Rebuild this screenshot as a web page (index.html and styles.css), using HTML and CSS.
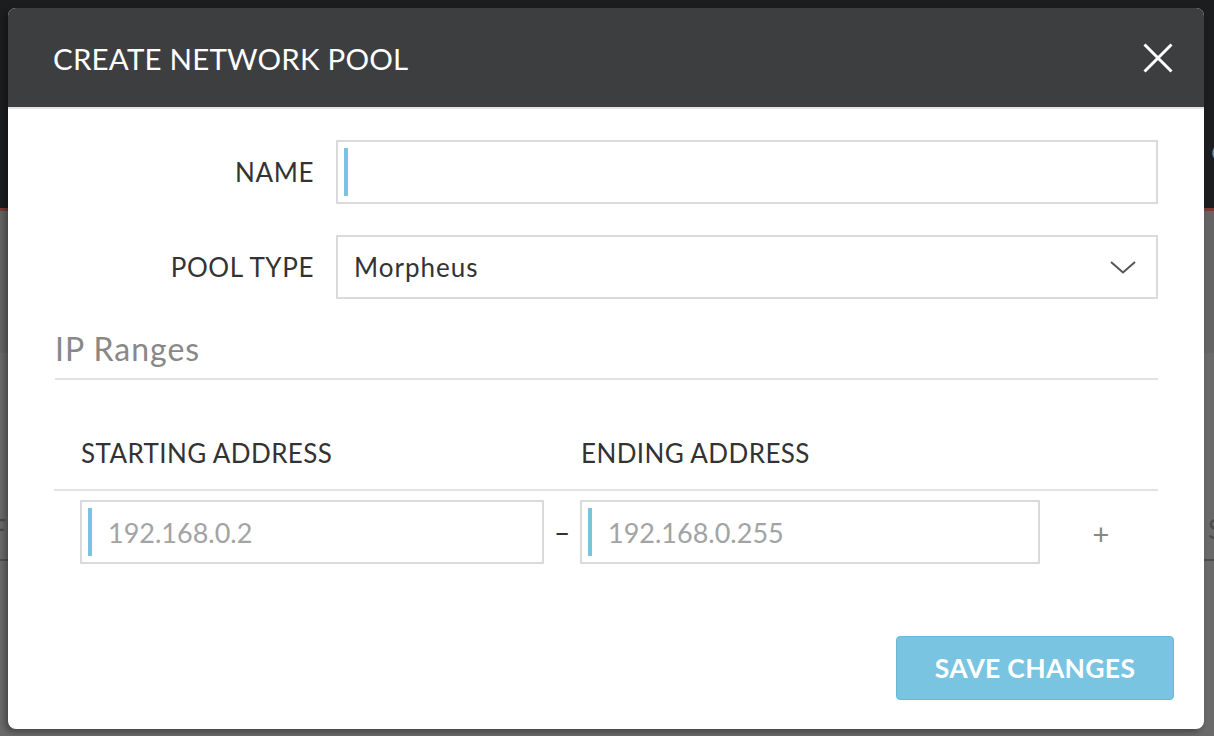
FILE: index.html
```html
<!DOCTYPE html>
<html>
<head>
<meta charset="utf-8">
<link rel="stylesheet" href="styles.css">
</head>
<body>
<div class="app">
  <div class="topbar">
    <span class="top-frag">o</span>
  </div>
  <div class="redline"></div>
  <div class="band">
    <div class="frag-row row1"><span class="fl">r</span><span class="fr">k</span></div>
  </div>
  <div class="content">
    <div class="frag-row row2"><span class="fl fl2">F</span><span class="fr fr2">S</span></div>
    <div class="frag-line"></div>
  </div>
</div>

<div class="modal">
  <div class="modal-header">
    <h1 class="modal-title">CREATE NETWORK POOL</h1>
    <button class="close" aria-label="Close">
      <svg width="30" height="30" viewBox="0 0 30 30"><path d="M1.5 1.5 L28.5 28.5 M28.5 1.5 L1.5 28.5" stroke="#fff" stroke-width="3" fill="none"/></svg>
    </button>
  </div>
  <div class="modal-body">
    <div class="form-row">
      <label class="form-label">NAME</label>
      <div class="field wide"><span class="bar"></span><input class="text-input" type="text"></div>
    </div>
    <div class="form-row">
      <label class="form-label">POOL TYPE</label>
      <div class="select wide">
        <span class="select-value">Morpheus</span>
        <svg class="chev" width="26" height="13" viewBox="0 0 26 13"><polyline points="1,1 13,11.5 25,1" fill="none" stroke="#555" stroke-width="2"/></svg>
      </div>
    </div>
    <h2 class="section-title">IP Ranges</h2>
    <div class="range-head">
      <span class="col-start">STARTING ADDRESS</span>
      <span class="col-end">ENDING ADDRESS</span>
    </div>
    <div class="range-row">
      <div class="field start"><span class="bar"></span><input class="text-input" type="text" placeholder="192.168.0.2"></div>
      <span class="dash">–</span>
      <div class="field end"><span class="bar"></span><input class="text-input" type="text" placeholder="192.168.0.255"></div>
      <span class="plus">+</span>
    </div>
  </div>
  <div class="modal-footer">
    <button class="save">SAVE CHANGES</button>
  </div>
</div>
</body>
</html>
```

FILE: styles.css
```css
* { box-sizing: border-box; }
html, body { margin: 0; padding: 0; }
body {
  width: 1214px;
  height: 736px;
  overflow: hidden;
  background: #696969;
  font-family: "Lato", "Open Sans", sans-serif;
  position: relative;
}

/* backdrop app */
.app { display: flex; flex-direction: column; height: 736px; }
.topbar {
  height: 208px;
  background: #1c1d1f;
  display: flex;
  justify-content: flex-end;
  align-items: center;
  padding-top: 92px;
}
.top-frag { color: #8a8a8a; font-size: 26px; margin-right: -12px; }
.redline { height: 3px; background: #7c3b34; }
.band { height: 142px; background: #646464; }
.content { flex: 1; background: #6a6a6a; }
.frag-row { display: flex; justify-content: space-between; font-size: 26px; color: #383838; }
.row1 { padding-top: 86px; }
.row2 { padding-top: 160px; color: #4a4a4a; }
.fl { margin-left: -14px; }
.fr { margin-right: -12px; }
.fl2 { margin-left: -9px; }
.fr2 { margin-right: -8px; }
.frag-line { height: 2px; background: #4f4f4f; margin-top: 14px; }

/* modal */
.modal {
  position: absolute;
  left: 8px;
  top: 8px;
  width: 1196px;
  height: 721px;
  background: #fff;
  border-radius: 8px;
  overflow: hidden;
  box-shadow: -3px 3px 6px rgba(0,0,0,0.35);
  display: flex;
  flex-direction: column;
}
.modal-header {
  height: 101px;
  background: #3d3e40;
  border-bottom: 2px solid #e4e4e4;
  display: flex;
  align-items: center;
  justify-content: space-between;
  padding: 0 31px 0 45px;
}
.modal-title {
  margin: 0;
  color: #fff;
  font-weight: 400;
  font-size: 29.5px;
  letter-spacing: 0.2px;
  padding-top: 2px;
}
.close {
  background: none;
  border: 0;
  padding: 0;
  width: 30px;
  height: 30px;
  display: flex;
}

.modal-body {
  padding: 31px 46px 0 46px;
  display: flex;
  flex-direction: column;
}
.form-row {
  display: flex;
  align-items: center;
  gap: 22px;
  margin-bottom: 31px;
}
.form-label {
  width: 260px;
  text-align: right;
  font-size: 26px;
  color: #333;
  letter-spacing: 0.6px;
}
.wide { width: 822px; }
.field {
  height: 64px;
  border: 2px solid #dadada;
  padding: 6px 6px;
  display: flex;
  align-items: stretch;
}
.bar { width: 4px; background: #7ac4e0; flex: none; }
.text-input {
  border: 0;
  outline: none;
  flex: 1;
  min-width: 0;
  padding: 0 0 0 16px;
  font-family: inherit;
  font-size: 27px;
  color: #333;
  background: transparent;
}
.text-input::placeholder { color: #a3a3a3; }
.select {
  height: 64px;
  border: 2px solid #dadada;
  display: flex;
  align-items: center;
  justify-content: space-between;
  padding: 0 20px 0 16px;
}
.select-value { font-size: 26px; color: #333; letter-spacing: 1px; }

.section-title {
  margin: -1px 0 0 1px;
  font-weight: 400;
  font-size: 32px;
  letter-spacing: 1px;
  color: #888;
  padding-bottom: 10px;
  border-bottom: 2px solid #e2e2e2;
}
.range-head {
  display: flex;
  padding: 57px 0 20px 27px;
  border-bottom: 2px solid #e2e2e2;
  font-size: 26px;
  color: #333;
  letter-spacing: 0.4px;
}
.col-start { width: 500px; }
.range-row {
  display: flex;
  align-items: center;
  padding: 9px 0 0 26px;
}
.start { width: 464px; }
.end { width: 460px; }
.dash {
  width: 36px;
  text-align: center;
  font-size: 28px;
  color: #333;
}
.plus {
  flex: 1;
  text-align: center;
  font-size: 29px;
  color: #888;
  padding: 2px 0 0 4px;
}

.modal-footer {
  margin-top: auto;
  display: flex;
  justify-content: flex-end;
  padding: 0 30px 29px 0;
}
.save {
  width: 278px;
  height: 64px;
  background: #79c4e1;
  border: 1px solid #68b9d8;
  border-radius: 4px;
  color: #fff;
  font-family: inherit;
  font-weight: 700;
  font-size: 26.5px;
  letter-spacing: 0.3px;
  padding-top: 0;
}
```
